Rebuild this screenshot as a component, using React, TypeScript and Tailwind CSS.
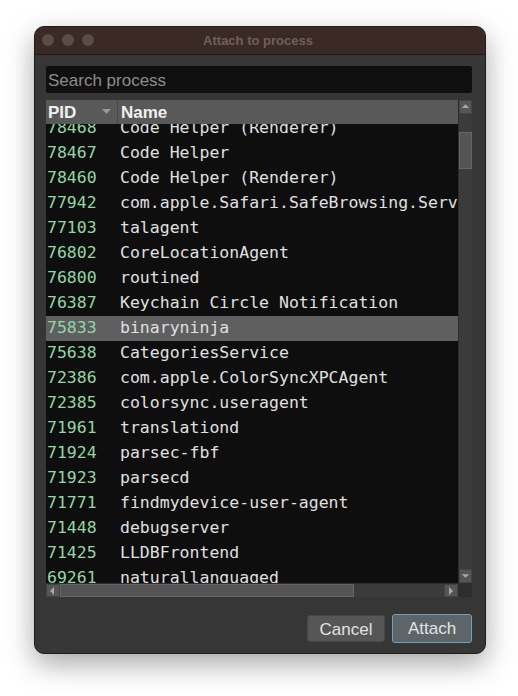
import React from "react"

const rows: [string, string][] = [
  ["78468", "Code Helper (Renderer)"],
  ["78467", "Code Helper"],
  ["78460", "Code Helper (Renderer)"],
  ["77942", "com.apple.Safari.SafeBrowsing.Service"],
  ["77103", "talagent"],
  ["76802", "CoreLocationAgent"],
  ["76800", "routined"],
  ["76387", "Keychain Circle Notification"],
  ["75833", "binaryninja"],
  ["75638", "CategoriesService"],
  ["72386", "com.apple.ColorSyncXPCAgent"],
  ["72385", "colorsync.useragent"],
  ["71961", "translationd"],
  ["71924", "parsec-fbf"],
  ["71923", "parsecd"],
  ["71771", "findmydevice-user-agent"],
  ["71448", "debugserver"],
  ["71425", "LLDBFrontend"],
  ["69261", "naturallanguaged"],
]

function Arrow({ dir }: { dir: "up" | "down" | "left" | "right" }) {
  const pts = {
    up: "2,7 10,7 6,3",
    down: "2,4 10,4 6,8",
    left: "7,2 7,10 3,6",
    right: "4,2 4,10 8,6",
  }[dir]
  return (
    <svg width="12" height="12" viewBox="0 0 12 12">
      <polygon points={pts} fill="#a8a8a8" />
    </svg>
  )
}

export default function App() {
  return (
    <div className="w-[518px] h-[696px] bg-white overflow-hidden pt-[26px] pl-[34px]">
      <div className="w-[452px] h-[628px] rounded-[10px] bg-[#363636] border border-[#1e1e1e] shadow-[0_10px_28px_rgba(0,0,0,0.35)] flex flex-col overflow-hidden">
        {/* title bar */}
        <div className="relative h-[28px] bg-[#3a2924] border-b border-[#1f1916] flex items-center justify-center shrink-0">
          <div className="absolute left-[7px] top-[7px] flex gap-[8px]">
            <span className="w-[12px] h-[12px] rounded-full bg-[#5c4c48]" />
            <span className="w-[12px] h-[12px] rounded-full bg-[#5c4c48]" />
            <span className="w-[12px] h-[12px] rounded-full bg-[#5c4c48]" />
          </div>
          <span className="text-[13px] font-bold text-[#6f605c] pt-[1px] -ml-[4px]" style={{ fontFamily: '"Liberation Sans", Arial, sans-serif' }}>
            Attach to process
          </span>
        </div>

        <div className="flex flex-col pl-[11px] pr-[13px] pt-[11px]" style={{ fontFamily: '"Liberation Sans", Arial, sans-serif' }}>
          {/* search */}
          <div className="h-[27px] bg-[#0f0f0f] rounded-[2px] flex items-center px-[2px] pt-[2px]">
            <span className="text-[17px] text-[#8c8c8c]">Search process</span>
          </div>

          {/* table */}
          <div className="mt-[7px] h-[497px] grid grid-cols-[412px_14px] grid-rows-[483px_14px] bg-[#0e0e0e]">
            <div className="flex flex-col overflow-hidden">
              <div className="h-[24px] bg-[#595959] flex shrink-0 relative z-10">
                <div className="w-[72px] border-r border-[#464646] flex items-center justify-between pl-[2px] pr-[6px] pt-[2px]">
                  <span className="text-[17px] font-bold text-[#f0f0f0]">PID</span>
                  <svg width="9" height="6" viewBox="0 0 9 6" className="-mt-[2px]">
                    <polygon points="0,0 9,0 4.5,5" fill="#9a9a9a" />
                  </svg>
                </div>
                <div className="flex items-center pl-[3px] pt-[2px]">
                  <span className="text-[17px] font-bold text-[#f0f0f0]">Name</span>
                </div>
              </div>
              <div className="flex-1 overflow-hidden">
                <div className="-mt-[8px]" style={{ fontFamily: '"DejaVu Sans Mono", "Liberation Mono", monospace' }}>
                  {rows.map(([pid, name]) => (
                    <div
                      key={pid}
                      className={`h-[25px] flex items-center whitespace-nowrap text-[16.5px] ${pid === "75833" ? "bg-[#5f5f5f]" : ""}`}
                    >
                      <span className="w-[74px] pl-[1px] shrink-0 text-[#92d6a5]">{pid}</span>
                      <span className="text-[#e0e0e0]">{name}</span>
                    </div>
                  ))}
                </div>
              </div>
            </div>

            {/* vertical scrollbar */}
            <div className="bg-[#3b3b3b] border-l border-[#2c2c2c] flex flex-col">
              <div className="h-[14px] bg-[#555555] border border-[#444] flex items-center justify-center">
                <Arrow dir="up" />
              </div>
              <div className="flex-1 pt-[18px]">
                <div className="h-[37px] bg-[#545454] border border-[#666]" />
              </div>
              <div className="h-[14px] bg-[#555555] border border-[#444] flex items-center justify-center">
                <Arrow dir="down" />
              </div>
            </div>

            {/* horizontal scrollbar */}
            <div className="bg-[#3b3b3b] border-t border-[#2c2c2c] flex">
              <div className="w-[14px] bg-[#555555] border border-[#444] flex items-center justify-center">
                <Arrow dir="left" />
              </div>
              <div className="flex-1 flex">
                <div className="w-[294px] bg-[#545454] border border-[#666]" />
              </div>
              <div className="w-[14px] bg-[#555555] border border-[#444] flex items-center justify-center">
                <Arrow dir="right" />
              </div>
            </div>
            <div className="bg-[#2e2e2e]" />
          </div>

          {/* buttons */}
          <div className="mt-[18px] flex justify-end gap-[7px]">
            <button className="w-[78px] h-[27px] rounded-[3px] bg-[#565656] border border-[#464646] text-[17px] text-[#e2e2e2] pt-[1px]">
              Cancel
            </button>
            <button className="w-[80px] h-[29px] -mt-[1px] rounded-[3px] bg-[#5d6569] border border-[#6fa0ba] text-[17px] text-[#e2e2e2] pt-[1px]">
              Attach
            </button>
          </div>
        </div>
      </div>
    </div>
  )
}
